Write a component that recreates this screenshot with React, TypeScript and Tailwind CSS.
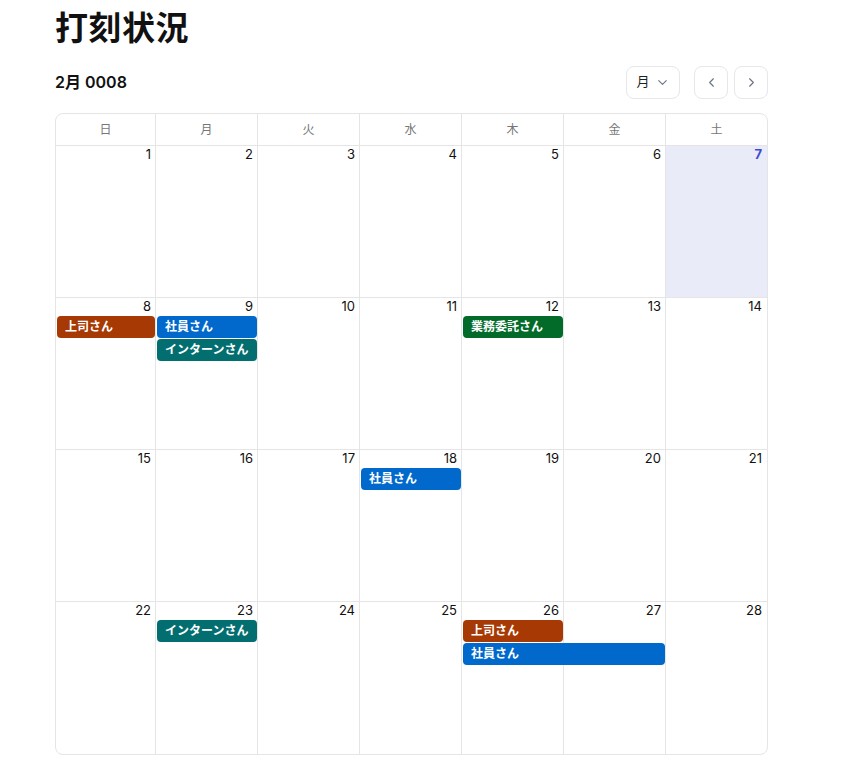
import { ChevronDown, ChevronLeft, ChevronRight } from "lucide-react";

type CalEvent = {
  title: string;
  col: number; // 0..6
  span: number;
  row: number; // 0 = first event slot
  color: string;
};

const DAY_NAMES = ["日", "月", "火", "水", "木", "金", "土"];

const COL_START = ["col-start-1", "col-start-2", "col-start-3", "col-start-4", "col-start-5", "col-start-6", "col-start-7"];
const COL_SPAN = ["col-span-1", "col-span-1", "col-span-2", "col-span-3"];
const EVENT_ROW = ["row-start-2", "row-start-3", "row-start-4"];

const GRID_COLS = "grid grid-cols-[100px_102px_102px_102px_102px_102px_1fr]";

const BOSS = "bg-[#a73a04]";
const STAFF = "bg-[#0169cb]";
const INTERN = "bg-[#036e70]";
const CONTRACT = "bg-[#036b2a]";

const weeks: { days: number[]; events: CalEvent[] }[] = [
  { days: [1, 2, 3, 4, 5, 6, 7], events: [] },
  {
    days: [8, 9, 10, 11, 12, 13, 14],
    events: [
      { title: "上司さん", col: 0, span: 1, row: 0, color: BOSS },
      { title: "社員さん", col: 1, span: 1, row: 0, color: STAFF },
      { title: "インターンさん", col: 1, span: 1, row: 1, color: INTERN },
      { title: "業務委託さん", col: 4, span: 1, row: 0, color: CONTRACT },
    ],
  },
  {
    days: [15, 16, 17, 18, 19, 20, 21],
    events: [{ title: "社員さん", col: 3, span: 1, row: 0, color: STAFF }],
  },
  {
    days: [22, 23, 24, 25, 26, 27, 28],
    events: [
      { title: "インターンさん", col: 1, span: 1, row: 0, color: INTERN },
      { title: "上司さん", col: 4, span: 1, row: 0, color: BOSS },
      { title: "社員さん", col: 4, span: 2, row: 1, color: STAFF },
    ],
  },
];

const TODAY = 7;

export default function App() {
  return (
    <div
      className="min-h-[773px] bg-white text-[#111]"
      style={{ fontFamily: 'Inter, "Noto Sans CJK JP", sans-serif' }}
    >
      <div className="ml-[55px] w-[713px] pt-[8px]">
        {/* Title */}
        <h1 className="text-[33px] font-bold leading-[40px] tracking-[0.5px]">打刻状況</h1>

        {/* Toolbar */}
        <div className="mt-[18px] flex items-center h-[32px]">
          <div className="text-[16px] font-semibold">2月 0008</div>
          <div className="ml-auto flex items-center">
            <button
              type="button"
              className="h-[33px] w-[54px] rounded-lg border border-gray-200 flex items-center justify-center gap-[5px] text-[13px] text-[#222]"
            >
              月
              <ChevronDown className="h-[15px] w-[15px] text-gray-500" strokeWidth={1.75} />
            </button>
            <button
              type="button"
              className="ml-[14px] h-[33px] w-[34px] rounded-lg border border-gray-200 flex items-center justify-center"
            >
              <ChevronLeft className="h-[15px] w-[15px] text-gray-500" strokeWidth={1.75} />
            </button>
            <button
              type="button"
              className="ml-[6px] h-[33px] w-[34px] rounded-lg border border-gray-200 flex items-center justify-center"
            >
              <ChevronRight className="h-[15px] w-[15px] text-gray-500" strokeWidth={1.75} />
            </button>
          </div>
        </div>

        {/* Calendar */}
        <div className="mt-[15px] rounded-lg border border-[#e5e5e5] overflow-hidden">
          <div className={`${GRID_COLS} h-[32px] border-b border-[#e5e5e5]`}>
            {DAY_NAMES.map((d, i) => (
              <div
                key={d}
                className={`flex items-center justify-center text-[12px] text-[#777] ${i < 6 ? "border-r border-[#e5e5e5]" : ""}`}
              >
                {d}
              </div>
            ))}
          </div>

          {weeks.map((w, wi) => (
            <div
              key={wi}
              className={`${GRID_COLS} grid-rows-[18px_23px_23px_1fr] h-[152px] ${wi < 3 ? "border-b border-[#e5e5e5]" : ""}`}
            >
              {w.days.map((d, i) => (
                <div
                  key={`bg-${d}`}
                  className={`${COL_START[i]} row-start-1 row-span-4 ${i < 6 ? "border-r border-[#e5e5e5]" : ""} ${d === TODAY ? "bg-[#e9ebf8]" : ""}`}
                />
              ))}
              {w.days.map((d, i) => (
                <div
                  key={`n-${d}`}
                  className={`${COL_START[i]} row-start-1 text-right pr-[5px] text-[13px] leading-[17px] ${d === TODAY ? "font-bold text-[#3a4bd3]" : "text-[#111]"}`}
                >
                  {d}
                </div>
              ))}
              {w.events.map((e, ei) => (
                <div
                  key={`e-${ei}`}
                  className={`${COL_START[e.col]} ${COL_SPAN[e.span]} ${EVENT_ROW[e.row]} mx-[1px] h-[22px] rounded-[4px] ${e.color} text-white text-[12px] font-bold leading-[22px] pl-[8px] truncate`}
                >
                  {e.title}
                </div>
              ))}
            </div>
          ))}
        </div>
      </div>
    </div>
  );
}
